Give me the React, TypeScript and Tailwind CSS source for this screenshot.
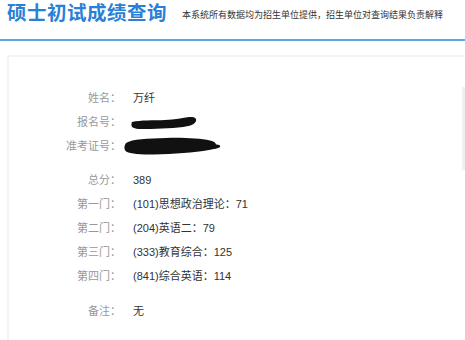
const rowsA = [
  { label: "姓名：", value: "万纤" },
  { label: "报名号：", blob: "short" },
  { label: "准考证号：", blob: "long" },
];

const rowsB = [
  { label: "总分：", value: "389" },
  { label: "第一门：", value: "(101)思想政治理论：71" },
  { label: "第二门：", value: "(204)英语二：79" },
  { label: "第三门：", value: "(333)教育综合：125" },
  { label: "第四门：", value: "(841)综合英语：114" },
];

const Blob = ({ kind }: { kind?: string }) =>
  kind === "short" ? (
    <svg width="66" height="14" viewBox="0 0 66 14" className="-ml-[2px] mt-[1px]">
      <path
        d="M1 6 C10 4 22 4.5 34 4 C44 3.5 52 2 58 1 C63 0.5 66 2 65 5 C64 8 60 10 52 11 C40 12.5 22 13 10 13 C3 13 0 11 0.5 9 C0.5 7.5 0.5 6.5 1 6 Z"
        fill="#111"
      />
    </svg>
  ) : (
    <svg width="98" height="18" viewBox="0 0 98 18" className="-ml-[9px]">
      <path
        d="M2 6 C8 2 24 1.5 42 1 C60 0.5 76 1.5 86 3.5 C90 4.5 92 6 92 7.5 C95 7.5 97 8.5 96 10 C94 11.5 90 12 85 13 C70 15.5 50 17 30 17.5 C14 17.8 4 16.5 1.5 14 C0 12 0 8.5 2 6 Z"
        fill="#111"
      />
    </svg>
  );

const Row = ({ label, value, blob }: { label: string; value?: string; blob?: string }) => (
  <div className="flex h-[24px] items-center">
    <div className="w-[112px] text-right text-[#999]">{label}</div>
    <div className="ml-[12px] flex items-center text-[#333]">
      {blob ? <Blob kind={blob} /> : value}
    </div>
  </div>
);

export default function App() {
  return (
    <div
      className="relative h-[340px] w-[465px] overflow-hidden bg-white"
      style={{ fontFamily: '"Liberation Sans", "Noto Sans CJK SC", sans-serif' }}
    >
      <div className="flex h-[39px] items-center whitespace-nowrap px-[7px] pb-[12px]">
        <h1 className="shrink-0 text-[19.5px] font-bold leading-none tracking-[0.5px] text-[#2a7fd6]">
          硕士初试成绩查询
        </h1>
        <p className="ml-[15px] shrink-0 pt-[4px] text-[9px] leading-none text-[#333]">
          本系统所有数据均为招生单位提供，招生单位对查询结果负责解释
        </p>
      </div>
      <div className="h-[2px] bg-[#5aa6e6]" />
      <div className="ml-[7px] mt-[14px] h-[320px] border-l-2 border-t-2 border-[#f3f3f3] pt-[29px] text-[11px]">
        {rowsA.map((r) => (
          <Row key={r.label} {...r} />
        ))}
        <div className="h-[10px]" />
        {rowsB.map((r) => (
          <Row key={r.label} {...r} />
        ))}
        <div className="h-[11px]" />
        <Row label="备注：" value="无" />
      </div>
      <div className="absolute right-0 top-[87px] h-[83px] w-[3px] bg-[#f0f0f0]" />
    </div>
  );
}
